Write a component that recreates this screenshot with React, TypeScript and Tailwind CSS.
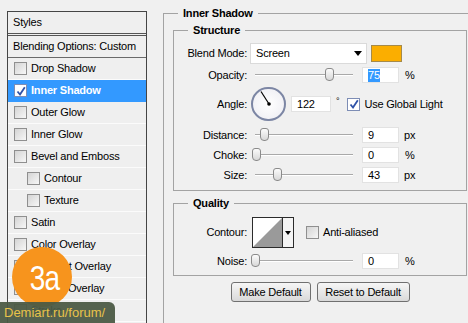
import React from 'react';

const font = "font-['Liberation_Sans',Arial,sans-serif]";

interface CheckProps {
  checked?: boolean;
}

function Check({ checked }: CheckProps) {
  if (checked) {
    return (
      <span className="w-[13px] h-[13px] shrink-0 border border-[#7d8db5] bg-white flex items-center justify-center">
        <svg width="10" height="10" viewBox="0 0 10 10">
          <path d="M1.5 5.5 L4 8.5 L8.8 1.2" fill="none" stroke="#2f52a8" strokeWidth="1.8" />
        </svg>
      </span>
    );
  }
  return (
    <span className="w-[13px] h-[13px] shrink-0 border border-[#8f8f8f] bg-linear-to-br from-[#d4d4d4] to-[#f7f7f7]" />
  );
}

interface SliderProps {
  thumb: number;
}

function Slider({ thumb }: SliderProps) {
  return (
    <div className="relative ml-[4px] w-[102px] h-[16px] shrink-0">
      <div className="absolute left-[4px] right-0 top-[7px] h-[2px] border-t border-[#a9a9a9] bg-white" />
      <div
        className="absolute top-[1px] w-[9px] h-[13px] rounded-t-[3px] rounded-b-[4px] border border-[#8a8a8a] bg-linear-to-b from-[#fbfbfb] to-[#d8d8d8]"
        style={{ left: thumb }}
      />
    </div>
  );
}

function NumBox({ value, selected, w = 37 }: { value: string; selected?: boolean; w?: number }) {
  return (
    <div
      className="h-[16px] bg-white border border-[#e2e2e2] flex items-center pl-[5px] shrink-0"
      style={{ width: w }}
    >
      <span className={selected ? 'bg-[#3399ff] text-white leading-[13px]' : 'leading-[13px]'}>{value}</span>
    </div>
  );
}

function Label({ children }: { children: React.ReactNode }) {
  return <div className="w-[73px] shrink-0 text-right">{children}</div>;
}

const layers = [
  { name: 'Drop Shadow' },
  { name: 'Inner Shadow', active: true },
  { name: 'Outer Glow' },
  { name: 'Inner Glow' },
  { name: 'Bevel and Emboss' },
  { name: 'Contour', indent: true },
  { name: 'Texture', indent: true },
  { name: 'Satin' },
  { name: 'Color Overlay' },
  { name: 'Gradient Overlay' },
  { name: 'Pattern Overlay' },
  { name: 'Stroke' },
];

export default function App() {
  return (
    <div className={`relative w-[468px] h-[323px] overflow-hidden bg-[#f0f0f0] flex items-start text-[11px] tracking-[-0.2px] text-black ${font}`}>
      {/* styles list */}
      <div className="ml-[7px] mt-[11px] w-[140px] h-[330px] shrink-0 border border-[#454545] bg-[#efefef]">
        <div className="h-[24px] border-b-[3px] border-double border-[#555] pl-[5px] flex items-center">Styles</div>
        <div className="h-[22px] border-b border-[#6a6a6a] pl-[5px] flex items-center">Blending Options: Custom</div>
        {layers.map((l) => (
          <div
            key={l.name}
            className={`h-[22px] border-b flex items-center gap-[4px] ${l.indent ? 'pl-[19px]' : 'pl-[6px]'} ${
              l.active ? 'bg-[#3399ff] border-[#3399ff] text-white font-bold' : 'border-[#fbfbfb]'
            }`}
          >
            <Check checked={l.active} />
            <span>{l.name}</span>
          </div>
        ))}
      </div>

      {/* Inner Shadow */}
      <fieldset className="ml-[16px] mt-[6px] w-[330px] shrink-0 border border-[#a3a3a3] pb-[40px]">
        <legend className="ml-[14px] px-[5px] font-bold leading-[14px]">Inner Shadow</legend>

        <fieldset className="ml-[9px] mt-[3px] w-[294px] border border-[#a3a3a3] pb-[7px]">
          <legend className="ml-[14px] px-[5px] font-bold leading-[14px]">Structure</legend>

          <div className="mt-[6px] h-[21px] flex items-center">
            <Label>Blend Mode:</Label>
            <div className="ml-[3px] w-[117px] h-[21px] bg-white border border-[#dadada] flex items-center justify-between pl-[5px] pr-[4px]">
              <span>Screen</span>
              <svg width="8" height="5" viewBox="0 0 8 5">
                <polygon points="0,0 8,0 4,5" fill="#000" />
              </svg>
            </div>
            <div className="ml-[4px] w-[31px] h-[17px] border border-[#a58a4a] bg-[#fbae00]" />
          </div>

          <div className="mt-[3px] h-[16px] flex items-center">
            <Label>Opacity:</Label>
            <Slider thumb={74} />
            <div className="ml-[9px]">
              <NumBox value="75" selected />
            </div>
            <span className="ml-[6px]">%</span>
          </div>

          <div className="mt-[4px] h-[34px] flex items-center">
            <Label>Angle:</Label>
            <div className="ml-[4px] w-[35px] h-[34px] shrink-0 rounded-full border-2 border-[#7c86a4] bg-radial from-white to-[#ececf2] flex items-center justify-center">
              <svg width="30" height="30" viewBox="0 0 30 30">
                <line x1="15" y1="15" x2="7" y2="2.5" stroke="#000" strokeWidth="1.2" />
                <circle cx="15" cy="15" r="1.8" fill="#000" />
              </svg>
            </div>
            <div className="ml-[5px]">
              <NumBox value="122" w={40} />
            </div>
            <span className="ml-[5px] -mt-[5px] text-[9px]">°</span>
            <div className="ml-[8px] flex items-center gap-[4px]">
              <Check checked />
              <span>Use Global Light</span>
            </div>
          </div>

          <div className="mt-[6px] h-[16px] flex items-center">
            <Label>Distance:</Label>
            <Slider thumb={9} />
            <div className="ml-[9px]">
              <NumBox value="9" />
            </div>
            <span className="ml-[5px]">px</span>
          </div>

          <div className="mt-[4px] h-[16px] flex items-center">
            <Label>Choke:</Label>
            <Slider thumb={1} />
            <div className="ml-[9px]">
              <NumBox value="0" />
            </div>
            <span className="ml-[6px]">%</span>
          </div>

          <div className="mt-[4px] h-[16px] flex items-center">
            <Label>Size:</Label>
            <Slider thumb={22} />
            <div className="ml-[9px]">
              <NumBox value="43" />
            </div>
            <span className="ml-[5px]">px</span>
          </div>
        </fieldset>

        <fieldset className="ml-[9px] mt-[5px] w-[294px] border border-[#a3a3a3] pb-[6px]">
          <legend className="ml-[14px] px-[5px] font-bold leading-[14px]">Quality</legend>

          <div className="mt-[7px] h-[31px] flex items-center">
            <Label>Contour:</Label>
            <div className="ml-[5px] w-[42px] h-[31px] border border-[#2b2b2b] bg-white flex shrink-0">
              <svg width="29" height="29" viewBox="0 0 29 29" className="shrink-0">
                <polygon points="0,29 29,0 29,29" fill="#9a9a9a" />
              </svg>
              <div className="flex-1 border-l border-[#2b2b2b] bg-[#f4f4f4] flex items-center justify-center">
                <svg width="6" height="4" viewBox="0 0 6 4">
                  <polygon points="0,0 6,0 3,4" fill="#000" />
                </svg>
              </div>
            </div>
            <div className="ml-[12px] flex items-center gap-[4px]">
              <Check />
              <span>Anti-aliased</span>
            </div>
          </div>

          <div className="mt-[5px] h-[16px] flex items-center">
            <Label>Noise:</Label>
            <Slider thumb={0} />
            <div className="ml-[9px]">
              <NumBox value="0" />
            </div>
            <span className="ml-[6px]">%</span>
          </div>
        </fieldset>

        <div className="ml-[10px] w-[292px] mt-[6px] flex justify-center gap-[6px]">
          <button className="w-[80px] h-[20px] rounded-[3px] border border-[#707070] bg-linear-to-b from-[#f6f6f6] to-[#d9d9d9]">
            Make Default
          </button>
          <button className="w-[93px] h-[20px] rounded-[3px] border border-[#707070] bg-linear-to-b from-[#f6f6f6] to-[#d9d9d9]">
            Reset to Default
          </button>
        </div>
      </fieldset>

      {/* watermark */}
      <div className="absolute left-[12px] top-[247px] w-[60px] h-[60px] rounded-full bg-[#f7941d] flex items-center justify-center">
        <span className={`text-white text-[35px] leading-none tracking-[-1px] scale-x-[0.8] ml-[4px] ${font}`}>3a</span>
      </div>
      <div className="absolute left-0 top-[302px] w-[115px] h-[21px] rounded-tr-[6px] bg-[#4b5a45]/95 flex items-center pl-[4px]">
        <span className={`text-[#e8c24a] text-[13px] tracking-normal ${font}`}>Demiart.ru/forum/</span>
      </div>
    </div>
  );
}
